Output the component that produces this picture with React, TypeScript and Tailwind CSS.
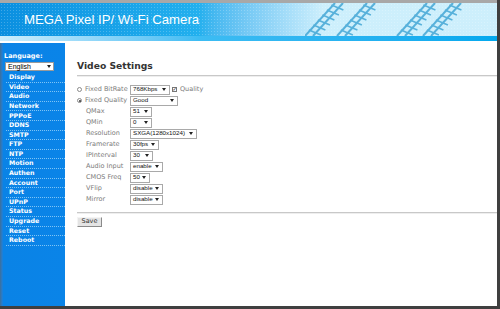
import React from "react";

const menu = [
  "Display", "Video", "Audio", "Network", "PPPoE", "DDNS", "SMTP", "FTP", "NTP",
  "Motion", "Authen", "Account", "Port", "UPnP", "Status", "Upgrade", "Reset", "Reboot",
];

const Select = ({ text, w }: { text: string; w: number }) => (
  <div
    className="flex items-center h-[10px] border border-[#a9a9a9] bg-white pl-[2px] pr-[3px] text-[6.2px] text-[#111] font-['Liberation_Sans',Arial,sans-serif]"
    style={{ width: w }}
  >
    <span className="leading-none flex-1 whitespace-nowrap">{text}</span>
    <span className="ml-[2px] shrink-0 w-0 h-0 border-l-[2px] border-r-[2px] border-t-[3px] border-l-transparent border-r-transparent border-t-[#222]" />
  </div>
);

const Radio = ({ on }: { on?: boolean }) => (
  <span className="flex items-center justify-center w-[5px] h-[5px] rounded-full border border-[#8a8a8a] bg-white mr-[3px]">
    {on && <span className="w-[2px] h-[2px] rounded-full bg-[#333]" />}
  </span>
);

const rows: { label: string; w: number; text: string; radio?: "off" | "on"; extra?: boolean }[] = [
  { label: "Fixed BitRate", w: 40, text: "768Kbps", radio: "off", extra: true },
  { label: "Fixed Quality", w: 48, text: "Good", radio: "on" },
  { label: "QMax", w: 22, text: "51" },
  { label: "QMin", w: 22, text: "0" },
  { label: "Resolution", w: 67, text: "SXGA(1280x1024)" },
  { label: "Framerate", w: 29, text: "30fps" },
  { label: "IPInterval", w: 23, text: "30" },
  { label: "Audio Input", w: 33, text: "enable" },
  { label: "CMOS Freq", w: 20, text: "50" },
  { label: "VFlip", w: 33, text: "disable" },
  { label: "Mirror", w: 33, text: "disable" },
];

const Tracks = () => (
  <svg className="absolute left-[305px] top-0" width="160" height="33" viewBox="0 0 160 33">
    <g stroke="#3aa2d3" strokeWidth="2" fill="none" opacity="0.8">
      {[0, 32, 92, 118].map((x, i) => (
        <g key={i} transform={`translate(${x} 0)`}>
          <line x1="0" y1="33" x2="30" y2="0" />
          <line x1="8" y1="33" x2="38" y2="0" />
          {[4, 9, 14, 19, 24, 29].map((t) => (
            <line key={t} x1={30 - t * 0.9} y1={t - 2} x2={38 - t * 0.9 + 4} y2={t + 3} strokeWidth="1.5" />
          ))}
        </g>
      ))}
    </g>
  </svg>
);

export default function App() {
  return (
    <div className="w-[500px] h-[309px] overflow-hidden bg-white flex flex-col font-['DejaVu_Sans',sans-serif] border-r-[3px] border-b-[3px] border-[#3f3f3f]">
      <div className="h-[3px] bg-[#a8a8a8] shrink-0" />
      <div className="relative h-[33px] shrink-0 bg-gradient-to-r from-[#0a8fe0] via-[#22b0ee] via-40% to-[#cdeffc] to-65% overflow-hidden">
        <div className="absolute inset-0 bg-[radial-gradient(rgba(255,255,255,0.22)_0.6px,transparent_0.9px)] bg-[length:3px_3px]" />
        <Tracks />
        <div className="relative pl-[24px] pt-[9px] text-white text-[13.2px] leading-[16px] font-['Liberation_Sans',Arial,sans-serif]">
          MEGA Pixel IP/ Wi-Fi Camera
        </div>
      </div>
      <div className="h-[5px] shrink-0 bg-gradient-to-r from-[#cdeefc] via-[#3cbcf3] via-40% to-[#02a9ee]" />
      <div className="flex flex-1 min-h-0">
        <div className="w-[65px] mt-[2px] bg-gradient-to-r from-[#3c6f9a] from-0% via-[#0a83e6] via-[5%] to-[#0a84e8] flex flex-col">
          <div className="pl-[4px] pt-[9px] text-[6.5px] leading-[8px] font-bold text-white">Language:</div>
          <div className="ml-[5px] mt-[2px] w-[49px] h-[9px] bg-white border border-[#9a9a9a] flex items-center justify-between px-[2px] text-[7px] text-black font-['Liberation_Sans',Arial,sans-serif]">
            <span className="leading-none">English</span>
            <span className="w-0 h-0 border-l-[2px] border-r-[2px] border-t-[3px] border-l-transparent border-r-transparent border-t-[#222]" />
          </div>
          <div className="mt-[2px] ml-[6px]">
            {menu.map((m) => (
              <div
                key={m}
                className="h-[9.6px] flex items-center pl-[3px] border-b border-dotted border-[#7fc4f5] text-white font-bold text-[6.3px] leading-none"
              >
                {m}
              </div>
            ))}
          </div>
        </div>
        <div className="flex-1 pl-[12px] pt-[19px]">
          <div className="h-[12px] leading-[12px] text-[9.2px] font-bold text-[#333]">Video Settings</div>
          <div className="mt-[3px] h-px bg-[#c8c8c8] shadow-[0_1px_0_#eee]" />
          <div className="mt-[8px] flex flex-col">
            {rows.map((r) => (
              <div key={r.label} className="h-[11px] flex items-center text-[6.5px] text-[#7a7a7a]">
                <div className="w-[53px] flex items-center">
                  {r.radio ? <Radio on={r.radio === "on"} /> : <span className="w-[9px]" />}
                  <span className="leading-none">{r.label}</span>
                </div>
                <Select text={r.text} w={r.w} />
                {r.extra && (
                  <div className="flex items-center ml-[2px]">
                    <span className="w-[5px] h-[5px] border border-[#777] bg-white flex items-center justify-center text-[5px] leading-none text-[#222] mr-[3px]">✓</span>
                    <span>Quality</span>
                  </div>
                )}
              </div>
            ))}
          </div>
          <div className="mt-[7px] h-px bg-[#c8c8c8] shadow-[0_1px_0_#eee]" />
          <div className="mt-[4px] w-[25px] h-[10px] bg-[#e4e4e4] border border-t-[#f4f4f4] border-l-[#f4f4f4] border-b-[#8a8a8a] border-r-[#8a8a8a] flex items-center justify-center text-[6.5px] text-[#333]">
            Save
          </div>
        </div>
      </div>
    </div>
  );
}
